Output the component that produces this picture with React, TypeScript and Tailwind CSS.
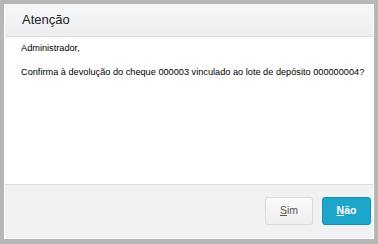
const App = () => {
  return (
    <div className="w-[378px] h-[244px] bg-[#b7b7b7] pt-[4px] pl-[4px] pr-[4px] pb-[5px] font-['Liberation_Sans',Arial,sans-serif]">
      <div className="flex flex-col h-full border border-t-0 border-white bg-white">
        {/* Header */}
        <div className="h-[33px] flex items-center px-[17px] bg-gradient-to-b from-[#f6f7f8] to-[#eceef0] border-b border-[#dadcde]">
          <h1 className="text-[13px] text-[#222]">Atenção</h1>
        </div>

        {/* Body */}
        <div className="flex-1 px-[16px] pt-[5px] text-[9.2px] text-black whitespace-nowrap">
          <p className="leading-[12px]">Administrador,</p>
          <p className="leading-[12px] mt-[12px]">
            Confirma à devolução do cheque 000003 vinculado ao lote de depósito 000000004?
          </p>
        </div>

        {/* Footer */}
        <div className="h-[54px] flex items-start justify-end gap-[9px] pt-[12px] pr-[2px] bg-[#f0f1f2] border-t border-[#dcdedf]">
          <button className="w-[48px] h-[28px] rounded-[3px] border border-[#d9dadb] bg-gradient-to-b from-[#fbfbfb] to-[#eeeeee] text-[10.5px] text-[#555]">
            <span className="underline">S</span>im
          </button>
          <button className="w-[49px] h-[28px] rounded-[3px] border border-[#1390b3] bg-[#1da6ca] text-[10.5px] font-bold text-white">
            <span className="underline">N</span>ão
          </button>
        </div>
      </div>
    </div>
  );
};

export default App;
